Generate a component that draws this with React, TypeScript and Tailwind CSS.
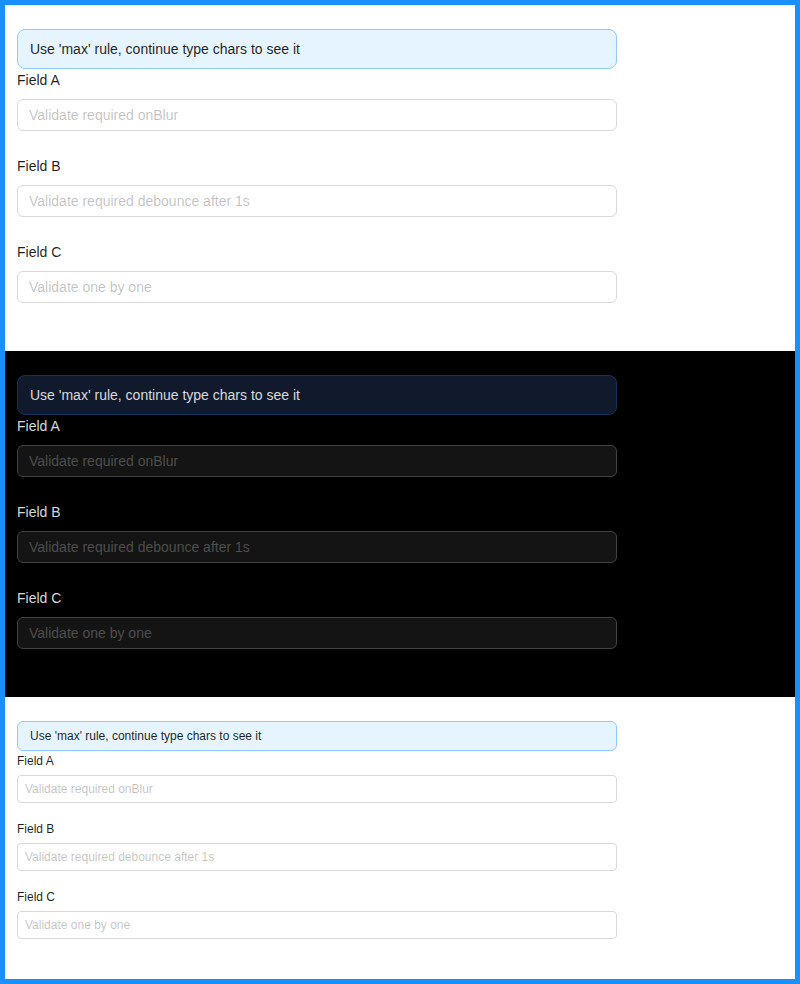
type Variant = "light" | "dark" | "small";

const FIELDS = [
  { label: "Field A", placeholder: "Validate required onBlur" },
  { label: "Field B", placeholder: "Validate required debounce after 1s" },
  { label: "Field C", placeholder: "Validate one by one" },
];

const STYLES: Record<
  Variant,
  { wrap: string; alert: string; label: string; input: string; item: string; gap: string }
> = {
  light: {
    wrap: "bg-white",
    alert:
      "h-10 rounded-lg border border-[#91caff] bg-[#e6f4ff] px-3 text-sm leading-[22px] text-[rgba(0,0,0,0.88)]",
    label: "text-sm leading-[22px] text-[rgba(0,0,0,0.88)]",
    input:
      "h-8 rounded-md border border-[#d9d9d9] bg-white px-[11px] text-sm text-[rgba(0,0,0,0.88)] placeholder:text-[rgba(0,0,0,0.25)]",
    item: "mb-6",
    gap: "mt-2",
  },
  dark: {
    wrap: "bg-black",
    alert:
      "h-10 rounded-lg border border-[#15325b] bg-[#111a2c] px-3 text-sm leading-[22px] text-[rgba(255,255,255,0.85)]",
    label: "text-sm leading-[22px] text-[rgba(255,255,255,0.85)]",
    input:
      "h-8 rounded-md border border-[#424242] bg-[#141414] px-[11px] text-sm text-[rgba(255,255,255,0.85)] placeholder:text-[rgba(255,255,255,0.25)]",
    item: "mb-6",
    gap: "mt-2",
  },
  small: {
    wrap: "bg-white",
    alert:
      "h-[30px] rounded-md border border-[#91caff] bg-[#e6f4ff] px-3 text-xs leading-5 text-[rgba(0,0,0,0.88)]",
    label: "text-xs leading-5 text-[rgba(0,0,0,0.88)]",
    input:
      "h-7 rounded border border-[#d9d9d9] bg-white px-[7px] text-xs text-[rgba(0,0,0,0.88)] placeholder:text-[rgba(0,0,0,0.25)]",
    item: "mb-4",
    gap: "mt-1",
  },
};

function DemoForm({ variant }: { variant: Variant }) {
  const s = STYLES[variant];
  return (
    <div className={`px-3 pt-6 pb-6 ${s.wrap}`}>
      <div className="w-[600px]">
        <div className={`flex items-center ${s.alert}`}>Use 'max' rule, continue type chars to see it</div>
        {FIELDS.map((f) => (
          <div key={f.label} className={s.item}>
            <div className={s.label}>{f.label}</div>
            <input type="text" placeholder={f.placeholder} className={`${s.gap} block w-full outline-none ${s.input}`} />
          </div>
        ))}
      </div>
    </div>
  );
}

export default function App() {
  return (
    <div className="h-[984px] w-[800px] border-[5px] border-[#1890ff] bg-white font-['Liberation_Sans',Arial,sans-serif]">
      <DemoForm variant="light" />
      <DemoForm variant="dark" />
      <DemoForm variant="small" />
    </div>
  );
}
